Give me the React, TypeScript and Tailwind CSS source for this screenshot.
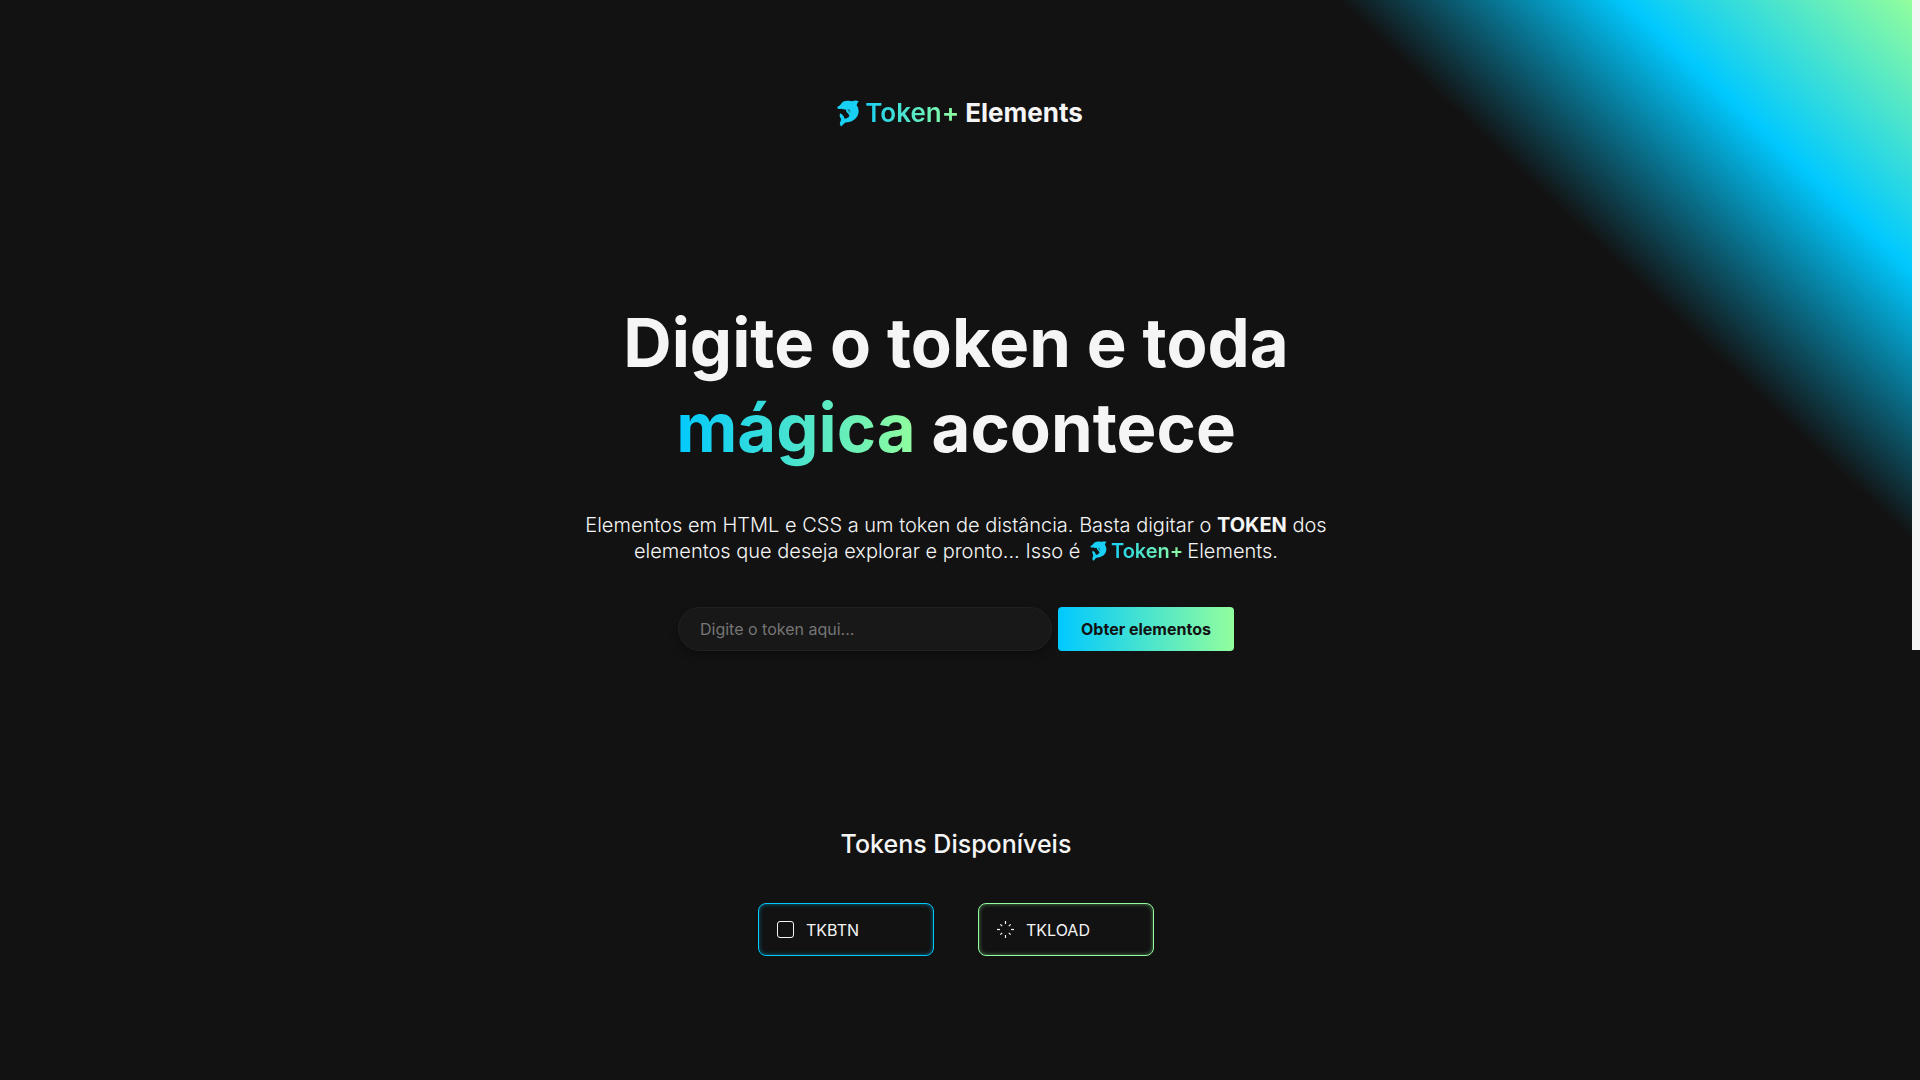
import React from "react";

function Dolphin({ className }: { className: string }) {
  return (
    <svg viewBox="0 0 64 78" className={className} fill="#18d0f3" aria-hidden="true">
      <path d="M1 20 C5 17 9 16 11 12 C15 4 24 1 34 2 C38 3 41 3 44 3 C50 1 57 1 63 3 C60 7 58 11 57 15 C64 24 65 37 59 47 C53 58 40 65 25 65 C20 67 18 72 12 77 C8 73 7 67 10 62 C12 58 12 55 10 51 C7 47 7 42 10 38 C17 42 21 48 22 54 C27 54 33 51 36 46 C35 43 33 40 32 38 C28 36 26 32 26 27 C21 28 17 27 13 25 C8 26 3 26 1 24 Z" />
      <path d="M30 26 C31 31 34 35 38 38 C40 33 38 29 36 26 Z" fill="#121212" opacity="0.35" />
    </svg>
  );
}

const ticks = [0, 45, 90, 135, 180, 225, 270, 315];

export default function App() {
  return (
    <div className="flex min-h-screen bg-[#121212] font-['Inter',sans-serif] text-[#f5f5f5]">
      <div className="relative min-w-0 flex-1 overflow-hidden">
        <div className="pointer-events-none absolute top-0 right-0 h-[50vh] w-[30%] bg-[linear-gradient(to_top_right,transparent_50%,#00c9ff_75%,#92fe9d)]" />
        <div className="relative flex flex-col items-center">
          <header className="flex pt-[97px]">
            <a href="#" className="flex items-center pl-2 text-[26px] leading-8 font-bold">
              <Dolphin className="mr-1.5 h-[27px] w-[22px]" />
              <span className="bg-linear-to-r/srgb from-[#18d0f3] to-[#92fe9d] bg-clip-text font-semibold text-transparent">Token+</span>
              <span className="ml-1.5">Elements</span>
            </a>
          </header>
          <main className="flex flex-col items-center pt-[171px] text-center">
            <h1 className="text-[67px] leading-[85px] font-bold">
              Digite o token e toda
              <br />
              <span className="bg-linear-to-r/srgb from-[#00c9ff] to-[#92fe9d] bg-clip-text text-transparent">mágica</span> acontece
            </h1>
            <p className="mt-[42px] text-[20px] leading-[26px] font-light">
              Elementos em HTML e CSS a um token de distância. Basta digitar o <strong className="font-bold">TOKEN</strong> dos
              <br />
              elementos que deseja explorar e pronto... Isso é{" "}
              <span className="mx-1 font-semibold whitespace-nowrap">
                <Dolphin className="mr-1 inline h-5 w-[17px] align-[-3px]" />
                <span className="bg-linear-to-r/srgb from-[#18d0f3] to-[#92fe9d] bg-clip-text text-transparent">Token+</span>
              </span>
              Elements.
            </p>
            <form className="mt-[43px] flex gap-1.5" onSubmit={(e) => e.preventDefault()}>
              <input
                type="text"
                aria-label="Token"
                placeholder="Digite o token aqui..."
                className="h-11 w-[374px] rounded-full border border-[#212121] bg-[#181818] px-[21px] text-base shadow-[0_4px_8px_rgba(0,0,0,0.3)] outline-none placeholder:text-[#757575]"
              />
              <button type="submit" className="h-11 w-44 rounded bg-linear-to-r/srgb from-[#00c9ff] to-[#92fe9d] text-base font-bold text-[#121212]">
                Obter elementos
              </button>
            </form>
          </main>
          <section className="flex flex-col items-center pt-[177px] pb-[124px]">
            <h2 className="text-[25px] leading-8 font-medium">Tokens Disponíveis</h2>
            <div className="mt-[43px] flex gap-11">
              <button type="button" className="flex h-[53px] w-44 items-center rounded-lg border border-[#00c9ff] px-[18px] text-base shadow-[inset_0_0_4px_rgba(0,201,255,0.5)]">
                <svg viewBox="0 0 17 17" className="mr-3 size-[17px]" fill="none" stroke="#f5f5f5" aria-hidden="true">
                  <rect x="0.5" y="0.5" width="16" height="16" rx="2.5" />
                </svg>
                TKBTN
              </button>
              <button type="button" className="flex h-[53px] w-44 items-center rounded-lg border border-[#92fe9d] px-[18px] text-base shadow-[inset_0_0_4px_rgba(146,254,157,0.5)]">
                <svg viewBox="0 0 17 17" className="mr-3 size-[17px]" stroke="#f5f5f5" strokeWidth="1.2" aria-hidden="true">
                  {ticks.map((a) => (
                    <path key={a} d={a % 90 ? "M8.5 1.2v2.6" : "M8.5 0v3"} transform={`rotate(${a} 8.5 8.5)`} />
                  ))}
                </svg>
                TKLOAD
              </button>
            </div>
          </section>
        </div>
      </div>
      <div className="w-2 bg-[#121212]" aria-hidden="true">
        <div className="h-[650px] bg-[#f5f5f5]" />
      </div>
    </div>
  );
}
